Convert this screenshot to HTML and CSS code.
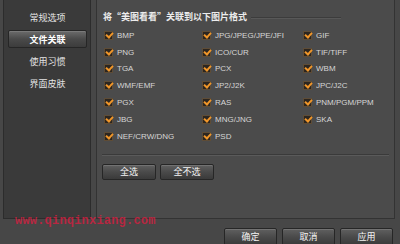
FILE: index.html
```html
<!DOCTYPE html>
<html>
<head>
<meta charset="utf-8">
<link rel="stylesheet" href="styles.css">
</head>
<body>
<div class="win">
  <div class="main">
    <div class="sidebar">
      <div class="nav">常规选项</div>
      <div class="nav sel">文件关联</div>
      <div class="nav">使用习惯</div>
      <div class="nav">界面皮肤</div>
    </div>
    <div class="content">
      <div class="group">
        <div class="gtitle"><span class="gtext">将“美图看看”关联到以下图片格式</span><span class="gline"></span></div>
        <div class="grid">
          <label class="item"><span class="cb"></span>BMP</label>
          <label class="item"><span class="cb"></span>JPG/JPEG/JPE/JFI</label>
          <label class="item"><span class="cb"></span>GIF</label>
          <label class="item"><span class="cb"></span>PNG</label>
          <label class="item"><span class="cb"></span>ICO/CUR</label>
          <label class="item"><span class="cb"></span>TIF/TIFF</label>
          <label class="item"><span class="cb"></span>TGA</label>
          <label class="item"><span class="cb"></span>PCX</label>
          <label class="item"><span class="cb"></span>WBM</label>
          <label class="item"><span class="cb"></span>WMF/EMF</label>
          <label class="item"><span class="cb"></span>JP2/J2K</label>
          <label class="item"><span class="cb"></span>JPC/J2C</label>
          <label class="item"><span class="cb"></span>PGX</label>
          <label class="item"><span class="cb"></span>RAS</label>
          <label class="item"><span class="cb"></span>PNM/PGM/PPM</label>
          <label class="item"><span class="cb"></span>JBG</label>
          <label class="item"><span class="cb"></span>MNG/JNG</label>
          <label class="item"><span class="cb"></span>SKA</label>
          <label class="item"><span class="cb"></span>NEF/CRW/DNG</label>
          <label class="item"><span class="cb"></span>PSD</label>
        </div>
      </div>
      <div class="selbtns">
        <button class="btn">全选</button>
        <button class="btn">全不选</button>
      </div>
    </div>
  </div>
  <div class="footer">
    <button class="btn fbtn">确定</button>
    <button class="btn fbtn">取消</button>
    <button class="btn fbtn">应用</button>
  </div>
  <div class="watermark">www.qinqinxiang.com</div>
</div>
</body>
</html>
```
FILE: styles.css
```css
* { box-sizing: border-box; }
html, body {
  margin: 0;
  padding: 0;
  width: 400px;
  height: 244px;
  overflow: hidden;
  background: #474747;
}
body {
  font-family: "Liberation Sans", "Noto Sans CJK SC", sans-serif;
  color: #d8d8d8;
}
.win {
  position: relative;
  width: 400px;
  height: 244px;
}
.main {
  display: flex;
  gap: 5px;
  height: 219px;
  padding: 0 5px 0 3px;
}
.sidebar {
  width: 88px;
  background: #3a3a3a;
  border: 1px solid #2c2c2c;
  border-top: none;
  display: flex;
  flex-direction: column;
  gap: 4px;
  padding: 8px 3px 0 4px;
}
.nav {
  height: 18px;
  display: flex;
  align-items: center;
  justify-content: center;
  font-family: "Noto Sans CJK SC", sans-serif;
  font-size: 9px;
  color: #e4e4e4;
}
.nav.sel {
  background: linear-gradient(#6c6c6c, #4a4a4a 50%, #3c3c3c);
  border: 1px solid #262626;
  border-radius: 2px;
  box-shadow: inset 0 1px 0 #7a7a7a;
  color: #fff;
  font-weight: bold;
}
.content {
  flex: 1;
  background: #4b4b4b;
  border: 1px solid #333;
  border-top: none;
  display: flex;
  flex-direction: column;
}
.group {
  margin: 9px 5px 0 5px;
  height: 146px;
  border-bottom: 1px solid #3a3a3a;
  box-shadow: 0 1px 0 #5a5a5a;
}
.gtitle {
  display: flex;
  align-items: center;
  height: 14px;
  padding-left: 1px;
}
.gtext {
  font-family: "Noto Sans CJK SC", sans-serif;
  font-size: 9px;
  font-weight: bold;
  color: #ececec;
  white-space: nowrap;
}
.gline {
  flex: 1;
  height: 1px;
  margin: 2px 48px 0 4px;
  background: #3c3c3c;
  box-shadow: 0 1px 0 #585858;
}
.grid {
  display: grid;
  grid-template-columns: 98px 101px 1fr;
  grid-auto-rows: 16.8px;
  margin-top: 4px;
  padding-left: 2px;
}
.item {
  display: flex;
  align-items: center;
  font-size: 8px;
  color: #d6d6d6;
  white-space: nowrap;
}
.cb {
  position: relative;
  width: 9px;
  height: 9px;
  margin-right: 4px;
  background: #2c2620;
  border: 1px solid #5e4c36;
}
.cb::after {
  content: "";
  position: absolute;
  left: 1px;
  top: 0px;
  width: 5px;
  height: 3px;
  border-left: 2px solid #f0962a;
  border-bottom: 2px solid #f0962a;
  transform: rotate(-48deg);
}
.selbtns {
  display: flex;
  gap: 4px;
  margin: 9px 0 0 5px;
}
.btn {
  height: 16px;
  width: 54px;
  padding: 0;
  font-family: "Noto Sans CJK SC", sans-serif;
  font-size: 9px;
  color: #f4f4f4;
  background: linear-gradient(#606060, #4a4a4a 50%, #3a3a3a);
  border: 1px solid #262626;
  border-radius: 2px;
  box-shadow: inset 0 1px 0 #727272;
  line-height: 14px;
}
.footer {
  display: flex;
  justify-content: flex-end;
  gap: 5px;
  padding: 9px 7px 0 0;
}
.fbtn {
  width: 53px;
  height: 18px;
}
.watermark {
  position: absolute;
  left: 15px;
  top: 214px;
  font-family: "Liberation Mono", monospace;
  font-size: 12px;
  font-weight: bold;
  color: #d42040;
  opacity: 0.8;
  letter-spacing: 0.2px;
}
```
